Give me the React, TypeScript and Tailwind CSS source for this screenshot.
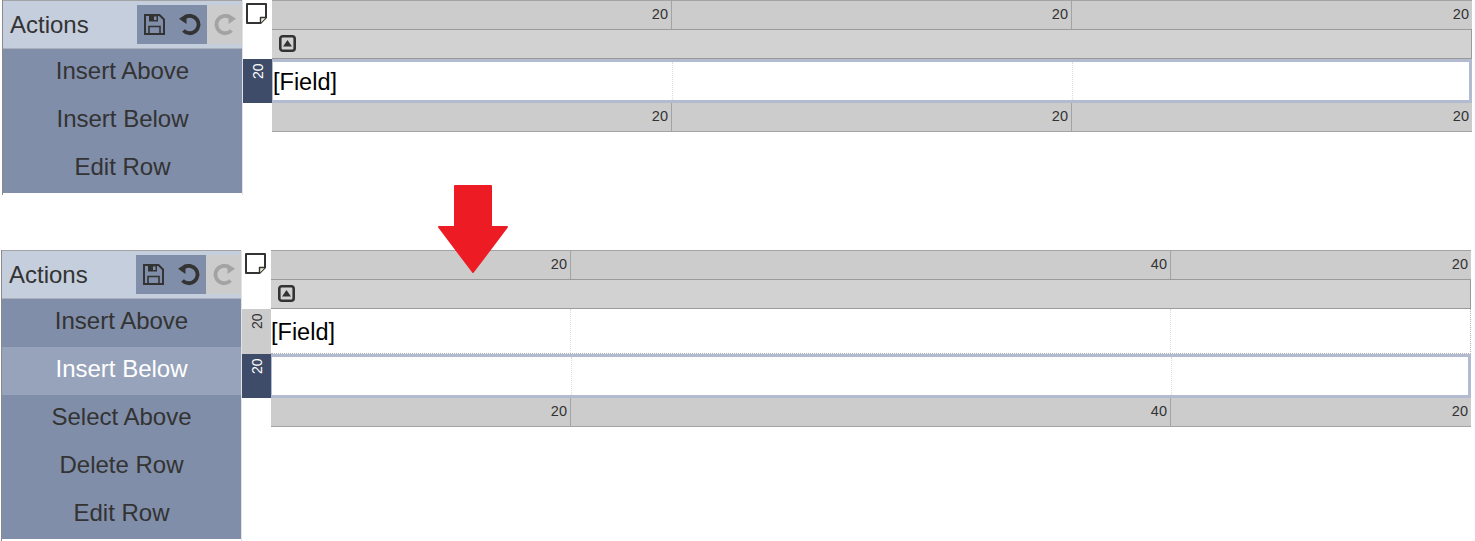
const font = "font-['Liberation_Sans',Arial,sans-serif]";

function SaveIcon() {
  return (
    <svg width="21" height="21" viewBox="0 0 21 21" fill="none" stroke="currentColor" strokeWidth="2">
      <path d="M1 1H15.5L20 5.5V20H1Z" />
      <path d="M5 12.5H16V20H5Z" strokeWidth="1.6" />
      <path d="M5 1H14V7.5H5Z" fill="currentColor" stroke="none" />
      <rect x="10" y="2.5" width="2.5" height="3.5" fill="#808ea9" stroke="none" />
    </svg>
  );
}

function UndoIcon({ flip }: { flip?: boolean }) {
  return (
    <svg className={flip ? '-scale-x-100' : ''} width="22" height="22" viewBox="0 0 22 22" fill="currentColor">
      <path d="M0 4.7L7.5 0V10Z" />
      <path d="M6.5 3A8.7 8.7 0 1 1 4.5 16.5" fill="none" stroke="currentColor" strokeWidth="3.8" />
    </svg>
  );
}

function NoteIcon() {
  return (
    <svg width="21" height="21" viewBox="0 0 21 21" fill="#ffffff" stroke="currentColor" strokeWidth="2" strokeLinejoin="round">
      <path d="M1 1H20V14.5L14.5 20H1Z" />
      <path d="M20 14.5H14.5V20" fill="#f4f0d8" strokeWidth="1.4" />
    </svg>
  );
}

function CollapseIcon() {
  return (
    <svg width="17" height="17" viewBox="0 0 17 17" fill="none" stroke="currentColor">
      <rect x="1.3" y="1.3" width="14.4" height="14.4" rx="2.5" strokeWidth="2.6" />
      <path d="M8.5 5L13 11.5H4Z" fill="currentColor" stroke="none" />
    </svg>
  );
}

function HeaderRow({ cols, top }: { cols: { w: string; label: string }[]; top?: boolean }) {
  return (
    <div className={`flex h-[29px] bg-[#cccccc] ${top ? 'border-t border-[#a3a3a3]' : 'border-b border-[#a3a3a3]'}`}>
      {cols.map((c, i) => (
        <div
          key={i}
          className={`${c.w} flex items-center justify-end pr-[3px] text-[14.5px] text-[#333333] ${top ? '' : 'pb-[1px]'} ${i < cols.length - 1 ? 'border-r border-[#a3a3a3]' : ''}`}
        >
          {c.label}
        </div>
      ))}
    </div>
  );
}

function GridRow({ cols, field, selected, h }: { cols: string[]; field?: boolean; selected?: boolean; h: string }) {
  return (
    <div className={`${h} flex bg-white ${selected ? 'border-y-[3px] border-r-[3px] border-l-[1px] border-[#b3bbd0]' : 'border-b border-r border-dotted border-[#b0b0b0]'}`}>
      {cols.map((w, i) => (
        <div
          key={i}
          className={`${i < cols.length - 1 ? `${w} shrink-0 border-r border-dotted border-[#dddddd]` : 'flex-1'} flex items-center pt-1 text-[23.5px] text-black`}
        >
          {i === 0 && field ? '[Field]' : ''}
        </div>
      ))}
    </div>
  );
}

function RowLabel({ active, h }: { active?: boolean; h: string }) {
  return (
    <div className={`${h} w-[29px] flex justify-center pt-[4px] text-sm ${active ? 'bg-[#3e4c69] text-white' : 'bg-[#cccccc] text-[#333333]'}`}>
      <span className="[writing-mode:vertical-rl] rotate-180 h-[16px] leading-none">20</span>
    </div>
  );
}

type Row = { field?: boolean; selected?: boolean; active?: boolean; h: string };

function Panel({
  items,
  hot,
  cols,
  labels,
  rows,
}: {
  items: string[];
  hot?: string;
  cols: string[];
  labels: string[];
  rows: Row[];
}) {
  const headerCols = cols.map((w, i) => ({ w, label: labels[i] }));
  return (
    <div className="flex">
      <div className="w-[241px] shrink-0 pb-[2px] border-l border-r border-l-[#8a8a8a] border-r-[#e2e2e2]">
        <div className="h-[49px] flex items-center bg-[#c5cedd] border-t border-[#a3a3a3] border-b border-b-[#a9afbc] pl-[7px]">
          <span className="text-2xl text-[#333333] flex-1">Actions</span>
          <div className="h-[39px] w-[70px] bg-[#808ea9] flex items-center justify-center gap-[14px] text-[#333333]">
            <SaveIcon />
            <UndoIcon />
          </div>
          <div className="h-[39px] w-[35px] bg-[#cccccc] flex items-center justify-center text-[#a3a3a3]">
            <UndoIcon flip />
          </div>
        </div>
        {items.map((label) => (
          <div
            key={label}
            className={`h-[48px] flex items-center justify-center pb-1 text-2xl ${label === hot ? 'bg-[#97a3bb] text-white' : 'bg-[#808ea9] text-[#333333]'}`}
          >
            {label}
          </div>
        ))}
      </div>
      <div className="w-[29px] shrink-0">
        <div className="h-[59px] flex justify-center pt-[3px] pr-[3px] text-[#333333]">
          <NoteIcon />
        </div>
        {rows.map((r, i) => (
          <RowLabel key={i} active={r.active} h={r.h} />
        ))}
      </div>
      <div className="w-[1200px] shrink-0">
        <HeaderRow cols={headerCols} top />
        <div className="h-[30px] flex items-center bg-[#d2d2d2] border-t border-b border-r border-[#9a9a9a] pl-[7px] pb-[2px] text-[#333333]">
          <CollapseIcon />
        </div>
        {rows.map((r, i) => (
          <GridRow key={i} cols={cols} field={r.field} selected={r.selected} h={r.h} />
        ))}
        <HeaderRow cols={headerCols} />
      </div>
    </div>
  );
}

export default function App() {
  const topCols = ['w-[400px]', 'w-[400px]', 'w-[400px]'];
  const bottomCols = ['w-[300px]', 'w-[600px]', 'w-[300px]'];
  return (
    <div className={`relative h-[541px] w-[1475px] overflow-hidden bg-white ${font}`}>
      <div className="pl-[2px] h-[250px]">
        <Panel
          items={['Insert Above', 'Insert Below', 'Edit Row']}
          cols={topCols}
          labels={['20', '20', '20']}
          rows={[{ field: true, selected: true, active: true, h: 'h-[44px]' }]}
        />
      </div>
      <div className="pl-px">
        <Panel
          items={['Insert Above', 'Insert Below', 'Select Above', 'Delete Row', 'Edit Row']}
          hot="Insert Below"
          cols={bottomCols}
          labels={['20', '40', '20']}
          rows={[
            { field: true, h: 'h-[45px]' },
            { selected: true, active: true, h: 'h-[44px]' },
          ]}
        />
      </div>
      {/* red arrow between the two states */}
      <svg className="absolute left-[438px] top-[185px]" width="70" height="88" viewBox="0 0 70 88">
        <path d="M17 1H53V42H69L35 87L1 42H17Z" fill="#ed1c24" stroke="#ed1c24" strokeWidth="2" strokeLinejoin="round" />
      </svg>
    </div>
  );
}
